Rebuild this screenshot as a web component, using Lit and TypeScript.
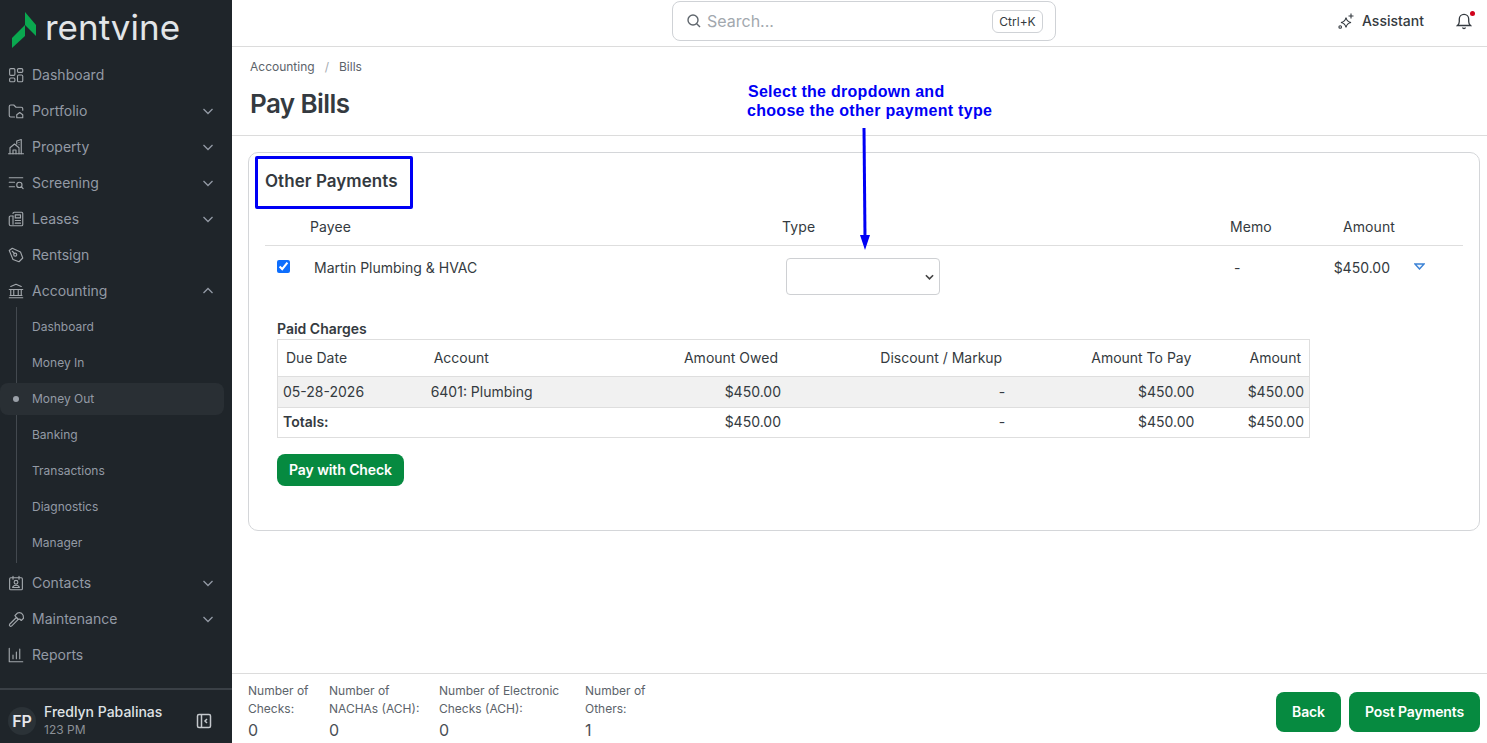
import { LitElement, html, css, svg } from 'lit';
import { customElement } from 'lit/decorators.js';

const icons: Record<string, unknown> = {
  dashboard: svg`<rect x="3.5" y="3.5" width="7" height="9" rx="1.5"/><rect x="3.5" y="16" width="7" height="5" rx="1.5"/><rect x="14" y="3.5" width="7" height="5" rx="1.5"/><rect x="14" y="12" width="7" height="9" rx="1.5"/>`,
  portfolio: svg`<path d="M10 20H5a2 2 0 0 1-2-2V6a2 2 0 0 1 2-2h4l3 3h7a2 2 0 0 1 2 2v2"/><path d="M13 21v-4l4-3 4 3v4z"/>`,
  property: svg`<path d="M2 21h20"/><path d="M4 21v-8l6-5 6 5v8"/><path d="M8 21v-5h4v5"/><path d="M13 8V4l6-2v19"/><path d="M16 6h0M16 9h0"/>`,
  screening: svg`<path d="M3 5h18M3 11h7M3 17h7"/><circle cx="16.5" cy="14.5" r="3.5"/><path d="M19 17l2.5 2.5"/>`,
  leases: svg`<path d="M8 4.5a1.5 1.5 0 0 1 1.5-1.5h10A1.5 1.5 0 0 1 21 4.5v15a1.5 1.5 0 0 1-1.5 1.5H5a2 2 0 0 1-2-2V9.5A1.5 1.5 0 0 1 4.5 8H8"/><path d="M8 8v11"/><rect x="11" y="6.5" width="7" height="4"/><path d="M11 14h7M11 17.5h7"/>`,
  rentsign: svg`<path d="M3 6l4-3 11 5 3 8-5 5-8-3z"/><circle cx="11" cy="11.5" r="2"/><path d="M7 7l3 3"/>`,
  accounting: svg`<path d="M3 21h18M3 10h18M5 6l7-3 7 3"/><path d="M5 10v8M9 10v8M15 10v8M19 10v8M4 18h16"/>`,
  contacts: svg`<rect x="3.5" y="5" width="17" height="16" rx="1.5"/><path d="M8 3v4M16 3v4"/><circle cx="12" cy="11" r="2.5"/><path d="M7.5 18c.5-2 2-3 4.5-3s4 1 4.5 3z"/>`,
  maintenance: svg`<path d="M3.5 19l9-9 2.5 2.5-9 9a1.8 1.8 0 0 1-2.5-2.5z"/><path d="M10.5 7.5L14 4c3-1 6 0 7.500 3L22 11l-3 3-2-2-2 .5z"/>`,
  reports: svg`<path d="M3 3v18h18"/><path d="M8 17v-5M12.5 17V8M17 17V4"/>`,
};

const chevron = (up: boolean) => html`<svg class="chev" viewBox="0 0 12 12"><path d=${up ? 'M1.5 8L6 3.5 10.5 8' : 'M1.5 4L6 8.5 10.5 4'}/></svg>`;

const topNav = [
  { icon: 'dashboard', label: 'Dashboard' },
  { icon: 'portfolio', label: 'Portfolio', chev: true },
  { icon: 'property', label: 'Property', chev: true },
  { icon: 'screening', label: 'Screening', chev: true },
  { icon: 'leases', label: 'Leases', chev: true },
  { icon: 'rentsign', label: 'Rentsign' },
  { icon: 'accounting', label: 'Accounting', chev: true, open: true },
];
const subNav = ['Dashboard', 'Money In', 'Money Out', 'Banking', 'Transactions', 'Diagnostics', 'Manager'];
const bottomNav = [
  { icon: 'contacts', label: 'Contacts', chev: true },
  { icon: 'maintenance', label: 'Maintenance', chev: true },
  { icon: 'reports', label: 'Reports' },
];

const stats = [
  { label: 'Number of Checks:', value: 0, width: 81 },
  { label: 'Number of NACHAs (ACH):', value: 0, width: 110 },
  { label: 'Number of Electronic Checks (ACH):', value: 0, width: 146 },
  { label: 'Number of Others:', value: 1, width: 81 },
];

@customElement('app-root')
export class AppRoot extends LitElement {
  static styles = css`
    :host {
      display: flex;
      position: relative;
      height: 743px;
      overflow: hidden;
      font-family: Inter, 'Noto Sans', sans-serif;
      font-size: 14px;
      color: #343a40;
      background: #fff;
    }
    /* sidebar */
    .sidebar {
      width: 232px;
      flex: none;
      display: flex;
      flex-direction: column;
      background: #1f252a;
      color: #939aa5;
    }
    .logo {
      height: 57px;
      display: flex;
      align-items: center;
      padding-left: 12px;
      gap: 9px;
      box-sizing: border-box;
      color: #e2e5e8;
      font-size: 35px;
      font-weight: 400;
      line-height: 1;
    }
    .logo svg {
      width: 24px;
      height: 36px;
      flex: none;
      margin-top: 3px;
    }
    .logo span {
      margin-top: -3px;
    }
    .nav {
      flex: 1;
    }
    .item {
      height: 36px;
      display: flex;
      align-items: center;
      padding-left: 7px;
      line-height: 18px;
    }
    .item .ico {
      width: 18px;
      height: 18px;
      flex: none;
      margin-right: 7px;
      fill: none;
      color: #a3a8ad;
      stroke: currentColor;
      stroke-width: 1.5;
      stroke-linecap: round;
      stroke-linejoin: round;
    }
    .item .chev {
      width: 12px;
      height: 12px;
      margin-left: auto;
      margin-right: 18px;
      fill: none;
      stroke: currentColor;
      stroke-width: 1.3;
    }
    .sub {
      position: relative;
      margin-bottom: 4px;
    }
    .sub::before {
      content: '';
      position: absolute;
      left: 16px;
      top: -2px;
      bottom: -2px;
      width: 1px;
      background: #43494f;
    }
    .sub-item {
      height: 36px;
      display: flex;
      align-items: center;
      padding-left: 32px;
      font-size: 12px;
      line-height: 16px;
      box-sizing: border-box;
    }
    .sub-item.active {
      position: relative;
      height: 32px;
      margin: 2px 8px 2px 0;
      background: #292f34;
      border-radius: 8px;
    }
    .sub-item.active::before {
      content: '';
      position: absolute;
      left: 13px;
      top: 13px;
      width: 6px;
      height: 6px;
      border-radius: 50%;
      background: #9aa0a8;
    }
    .user {
      height: 53px;
      border-top: 2px solid #3a4046;
      display: flex;
      align-items: center;
      padding: 0 0 0 8px;
      box-sizing: content-box;
    }
    .avatar {
      width: 28px;
      height: 28px;
      border-radius: 50%;
      background: #2b3237;
      color: #e5e7eb;
      display: flex;
      align-items: center;
      justify-content: center;
      font-size: 16px;
      font-weight: 600;
      flex: none;
      margin-top: 8px;
    }
    .who {
      margin-left: 8px;
      flex: 1;
      margin-top: 9px;
    }
    .who b {
      display: block;
      font-size: 14px;
      line-height: 18px;
      font-weight: 500;
      color: #dfe2e5;
    }
    .who small {
      display: block;
      font-size: 12px;
      line-height: 18px;
      color: #8b9097;
    }
    .collapse {
      width: 16px;
      height: 16px;
      margin-right: 20px;
      margin-top: 8px;
      fill: none;
      stroke: #c4c8cc;
      stroke-width: 1.5;
    }
    /* main column */
    .main {
      flex: 1;
      min-width: 0;
      display: flex;
      flex-direction: column;
    }
    .topbar {
      height: 47px;
      flex: none;
      border-bottom: 1px solid #dcdcdc;
      display: flex;
      align-items: center;
      position: relative;
      padding: 0 15px 5px 0;
      justify-content: flex-end;
      box-sizing: border-box;
    }
    .search {
      position: absolute;
      left: 440px;
      top: 1px;
      width: 384px;
      height: 40px;
      box-sizing: border-box;
      border: 1px solid #cfd2d6;
      border-radius: 8px;
      display: flex;
      align-items: center;
      padding: 0 12px 0 14px;
      font-size: 16px;
      color: #a2a8ae;
    }
    .search svg {
      width: 14px;
      height: 14px;
      margin-right: 6px;
      fill: none;
      stroke: #5f666d;
      stroke-width: 1.4;
    }
    .kbd {
      margin-left: auto;
      width: 51px;
      height: 23px;
      box-sizing: border-box;
      border: 1px solid #cfd2d6;
      border-radius: 6px;
      font-size: 12px;
      color: #343a40;
      display: flex;
      align-items: center;
      justify-content: center;
    }
    .assistant {
      display: flex;
      align-items: center;
      gap: 8px;
      font-size: 14px;
      font-weight: 500;
      margin-right: 32px;
    }
    .assistant svg {
      width: 16px;
      height: 16px;
      fill: none;
      stroke: #343a40;
      stroke-width: 1.1;
    }
    .bell {
      position: relative;
      width: 16px;
      height: 18px;
    }
    .bell svg {
      width: 16px;
      height: 18px;
      fill: none;
      stroke: #343a40;
      stroke-width: 1.3;
    }
    .bell i {
      position: absolute;
      right: -3px;
      top: -1px;
      width: 5px;
      height: 5px;
      border-radius: 50%;
      background: #d0021b;
    }
    .head {
      height: 88px;
      flex: none;
      border-bottom: 1px solid #dcdcdc;
      padding-left: 18px;
      box-sizing: content-box;
    }
    .crumbs {
      padding-top: 12px;
      font-size: 12px;
      line-height: 16px;
      color: #5c636a;
      display: flex;
    }
    .crumbs span {
      margin: 0 10px;
      color: #a5aab0;
    }
    h1 {
      margin: 10px 0 0;
      font-size: 26px;
      line-height: 38px;
      font-weight: 600;
      letter-spacing: -0.6px;
      color: #343a40;
    }
    .content {
      flex: 1;
      min-height: 0;
      padding: 16px 7px 0 16px;
    }
    .card {
      border: 1px solid #d4d6d9;
      border-radius: 10px;
      height: 379px;
      box-sizing: border-box;
      padding: 0 16px;
    }
    h2 {
      margin: 0;
      padding-top: 17px;
      font-size: 17px;
      line-height: 22px;
      font-weight: 600;
      letter-spacing: 0.05px;
      color: #343a40;
    }
    .pay-row {
      display: grid;
      grid-template-columns: 45px 472px 448px 90px 75px;
      width: 1198px;
    }
    .pay-head {
      margin-top: 15px;
      height: 39px;
      box-sizing: border-box;
      border-bottom: 1px solid #dedede;
      line-height: 20px;
      padding-top: 10px;
      letter-spacing: 0.1px;
    }
    .right {
      text-align: right;
    }
    .pay-body {
      padding-top: 12px;
      height: 46px;
      box-sizing: content-box;
      position: relative;
      line-height: 20px;
    }
    .pay-body input {
      margin: 2px 0 0 12px;
      width: 13px;
      height: 13px;
      accent-color: #0d6efd;
    }
    .pay-body .name {
      padding-left: 4px;
    }
    .pay-body select {
      display: block;
      margin: 0 0 0 4px;
      width: 154px;
      height: 37px;
      appearance: none;
      background: #fff url("data:image/svg+xml,%3Csvg xmlns='http://www.w3.org/2000/svg' viewBox='0 0 10 6'%3E%3Cpath d='M1 1l4 4 4-4' fill='none' stroke='%23444' stroke-width='1.8'/%3E%3C/svg%3E") no-repeat right 5px center / 9px 6px;
      border: 1px solid #ced0d3;
      border-radius: 4px;
    }
    .pay-body .memo {
      padding-left: 4px;
    }
    .pay-body .amt {
      padding-right: 5px;
      text-align: right;
    }
    .pay-body .toggle {
      position: absolute;
      left: 1149px;
      top: 17px;
      width: 11px;
      height: 7px;
      fill: #f0f6fd;
      stroke: #3b82d6;
      stroke-width: 1.4;
    }
    h3 {
      margin: 15px 0 0 12px;
      font-size: 14px;
      line-height: 20px;
      font-weight: 600;
    }
    table {
      margin-left: 12px;
      width: 1033px;
      table-layout: fixed;
      border-collapse: collapse;
      border: 1px solid #dedede;
    }
    th {
      height: 37px;
      padding: 0 8px 1px;
      box-sizing: border-box;
      text-align: left;
      font-weight: 400;
      border-bottom: 1px solid #dedede;
    }
    td {
      padding: 0 5px 1px;
    }
    th.right,
    td.right {
      text-align: right;
    }
    tbody tr.line {
      background: #f1f1f1;
      border-bottom: 1px solid #dedede;
      height: 31px;
    }
    tbody tr.total {
      height: 30px;
    }
    tr.total td {
      padding-bottom: 3px;
    }
    tr.total td:first-child {
      font-weight: 600;
    }
    .btn {
      display: inline-flex;
      align-items: center;
      justify-content: center;
      border: 0;
      padding: 0 0 2px;
      background: #068a40;
      color: #fff;
      font-family: inherit;
      font-size: 14px;
      font-weight: 600;
      letter-spacing: -0.1px;
      border-radius: 8px;
    }
    .pay-check {
      margin: 16px 0 0 12px;
      width: 127px;
      height: 32px;
    }
    .foot {
      height: 69px;
      flex: none;
      border-top: 1px solid #dcdcdc;
      display: flex;
      padding: 0 7px 0 16px;
    }
    .stat {
      padding-top: 8px;
      font-size: 12px;
      line-height: 18px;
      color: #5c636a;
    }
    .stat div {
      font-size: 16px;
      line-height: 24px;
      color: #4a5056;
    }
    .actions {
      margin-left: auto;
      display: flex;
      gap: 8px;
      padding-top: 18px;
    }
    .actions .btn {
      height: 40px;
    }
    .back {
      width: 65px;
    }
    .post {
      width: 131px;
    }
    /* tutorial markup over the page */
    .box {
      position: absolute;
      left: 255px;
      top: 156px;
      width: 158px;
      height: 53px;
      box-sizing: border-box;
      border: 3px solid #0000f5;
      border-radius: 2px;
    }
    .note {
      position: absolute;
      left: 747px;
      top: 82px;
      font-family: 'Liberation Sans', Arial, sans-serif;
      font-size: 16px;
      font-weight: 700;
      line-height: 19px;
      letter-spacing: 0.3px;
      color: #0000f5;
      white-space: nowrap;
    }
    .note div:first-child {
      padding-left: 1px;
      letter-spacing: 0.27px;
    }
    .arrow {
      position: absolute;
      left: 855px;
      top: 126px;
      width: 20px;
      height: 126px;
    }
  `;

  private navItem(n: { icon: string; label: string; chev?: boolean; open?: boolean }) {
    return html`<div class="item">
      <svg class="ico" viewBox="0 0 24 24">${icons[n.icon]}</svg>
      ${n.label}
      ${n.chev ? chevron(!!n.open) : ''}
    </div>`;
  }

  render() {
    return html`
      <aside class="sidebar">
        <div class="logo">
          <svg viewBox="0 0 24 36">
            <path d="M13 0l11 13v11L13 13z" fill="#0aa84f" />
            <path d="M0 26l13-13v11L0 36z" fill="#0aa84f" />
          </svg>
          <span>rentvine</span>
        </div>
        <nav class="nav">
          ${topNav.map((n) => this.navItem(n))}
          <div class="sub">
            ${subNav.map((s) => html`<div class="sub-item ${s === 'Money Out' ? 'active' : ''}">${s}</div>`)}
          </div>
          ${bottomNav.map((n) => this.navItem(n))}
        </nav>
        <div class="user">
          <div class="avatar">FP</div>
          <div class="who"><b>Fredlyn Pabalinas</b><small>123 PM</small></div>
          <svg class="collapse" viewBox="0 0 16 16">
            <rect x="1.5" y="1.5" width="13" height="13" rx="1.5" />
            <path d="M5.5 1.5v13M11 6L9 8l2 2" />
          </svg>
        </div>
      </aside>

      <div class="main">
        <header class="topbar">
          <div class="search">
            <svg viewBox="0 0 14 14"><circle cx="6" cy="6" r="5" /><path d="M9.7 9.7L13 13" /></svg>
            Search...
            <span class="kbd">Ctrl+K</span>
          </div>
          <div class="assistant">
            <svg viewBox="0 0 16 16">
              <path d="M8 4.500c.6 3 1.900 4.400 5 5-3.100.6-4.400 2-5 5-.6-3-1.900-4.400-5-5 3.100-.6 4.400-2 5-5z" />
              <path d="M13 .5v5M10.500 3h5" />
              <circle cx="2.200" cy="14" r="1.300" />
            </svg>
            Assistant
          </div>
          <div class="bell">
            <svg viewBox="0 0 16 18">
              <path d="M1.5 13.5c1.2-1 1.8-2.2 1.8-4V7a4.7 4.7 0 0 1 9.4 0v2.5c0 1.8.6 3 1.8 4z" />
              <path d="M6.5 15.5a1.6 1.6 0 0 0 3 0" />
            </svg>
            <i></i>
          </div>
        </header>

        <div class="head">
          <div class="crumbs">Accounting<span>/</span>Bills</div>
          <h1>Pay Bills</h1>
        </div>

        <div class="content">
          <section class="card">
            <h2>Other Payments</h2>
            <div class="pay-row pay-head">
              <div></div>
              <div>Payee</div>
              <div>Type</div>
              <div>Memo</div>
              <div class="right">Amount</div>
            </div>
            <div class="pay-row pay-body">
              <input type="checkbox" checked />
              <div class="name">Martin Plumbing &amp; HVAC</div>
              <select></select>
              <div class="memo">-</div>
              <div class="amt">$450.00</div>
              <svg class="toggle" viewBox="0 0 11 7"><path d="M1 1h9L5.5 6z" /></svg>
            </div>
            <h3>Paid Charges</h3>
            <table>
              <colgroup>
                <col style="width:148px" /><col style="width:194px" /><col style="width:166px" />
                <col style="width:224px" /><col style="width:189px" /><col style="width:110px" />
              </colgroup>
              <thead>
                <tr>
                  <th>Due Date</th>
                  <th>Account</th>
                  <th class="right">Amount Owed</th>
                  <th class="right">Discount / Markup</th>
                  <th class="right">Amount To Pay</th>
                  <th class="right">Amount</th>
                </tr>
              </thead>
              <tbody>
                <tr class="line">
                  <td>05-28-2026</td>
                  <td>6401: Plumbing</td>
                  <td class="right">$450.00</td>
                  <td class="right">-</td>
                  <td class="right">$450.00</td>
                  <td class="right">$450.00</td>
                </tr>
                <tr class="total">
                  <td>Totals:</td>
                  <td></td>
                  <td class="right">$450.00</td>
                  <td class="right">-</td>
                  <td class="right">$450.00</td>
                  <td class="right">$450.00</td>
                </tr>
              </tbody>
            </table>
            <button class="btn pay-check">Pay with Check</button>
          </section>
        </div>

        <footer class="foot">
          ${stats.map(
            (s) => html`<div class="stat" style="width:${s.width}px">
              <span style="display:block;width:80%;min-width:${Math.min(s.width - 8, 122)}px">${s.label}</span>
              <div>${s.value}</div>
            </div>`
          )}
          <div class="actions">
            <button class="btn back">Back</button>
            <button class="btn post">Post Payments</button>
          </div>
        </footer>
      </div>

      <div class="box"></div>
      <div class="note"><div>Select the dropdown and</div><div>choose the other payment type</div></div>
      <svg class="arrow" viewBox="0 0 20 126">
        <path d="M9 2l1 110" stroke="#0000f5" stroke-width="3" fill="none" />
        <path d="M5 109h10l-5 15z" fill="#0000f5" />
      </svg>
    `;
  }
}
